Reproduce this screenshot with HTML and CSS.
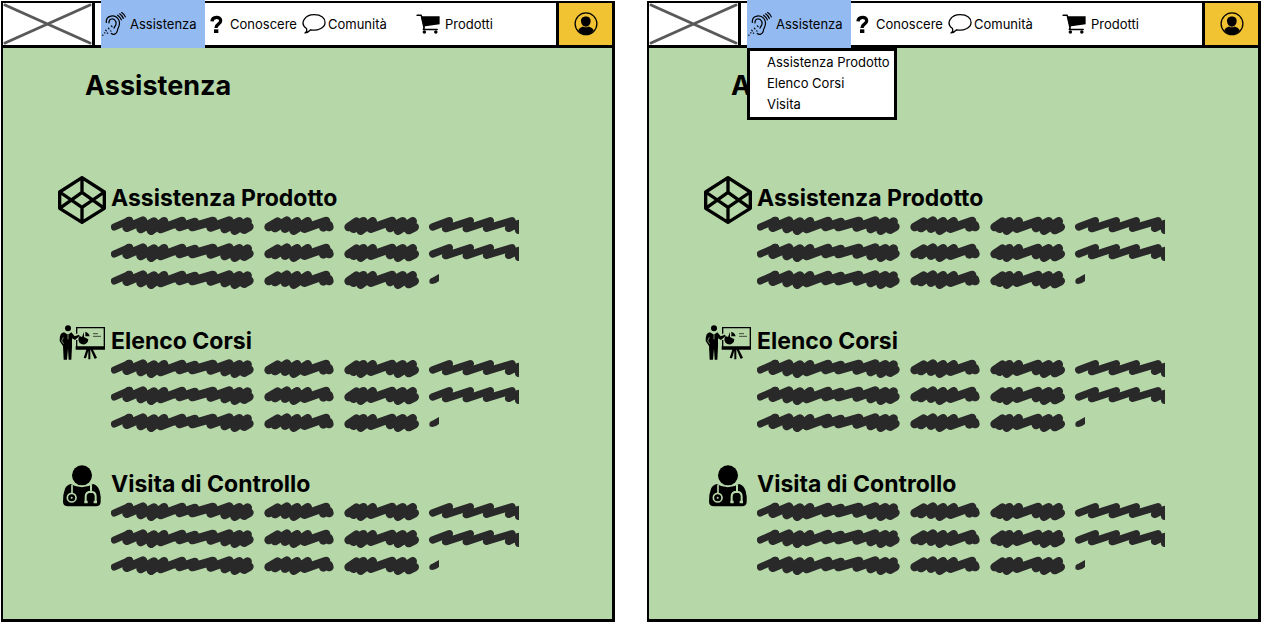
FILE: index.html
```html
<!DOCTYPE html>
<html lang="it">
<head>
<meta charset="utf-8">
<meta name="viewport" content="width=device-width, initial-scale=1">
<title>Assistenza</title>
<link rel="stylesheet" href="styles.css">
</head>
<body>
<svg class="sprite" aria-hidden="true">
  <symbol id="ear" viewBox="303 36 72 75">
    <g fill="none" stroke="#000" stroke-width="3.6" stroke-linecap="round">
      <path d="M316 69C314 46 343 43 353 61C361 77 350 83 349 94C347 104 337 108 331 102"/>
      <path d="M324 70C323 57 338 54 344 65C349 74 341 80 339 86"/>
      <path d="M350 47Q358 53 361 61M356 43Q364 49 367 57M362 39Q371 45 373 52"/>
      <path d="M305 107h1M311 100h1M319 101h1M314 92l2 2M322 86l2 2M329 94l1 1M331 79l2 2"/>
    </g>
  </symbol>
  <symbol id="question" viewBox="630 45 39 54">
    <path fill="none" stroke="#000" stroke-width="10" d="M636 64C637 49 662 48 662 62C662 74 648 71 648 84"/>
    <path fill="#000" d="M642 88h13v11h-13z"/>
  </symbol>
  <symbol id="bubble" viewBox="34 42 75 66">
    <path fill="#fff" stroke="#000" stroke-width="4" stroke-linejoin="round" d="M48 89C25 73 43 46 72 46C95 46 106 57 106 70C106 87 82 98 61 93Q53 102 43 103Q51 99 48 89Z"/>
  </symbol>
  <symbol id="cart" viewBox="377 45 69 60">
    <path fill="none" stroke="#000" stroke-width="4" stroke-linejoin="round" stroke-linecap="round" d="M380 50h12l9 41h37M401 83l-3 8"/>
    <path fill="#000" d="M391 53h54v23l-46 6z"/>
    <circle cx="401" cy="98" r="5"/><circle cx="434" cy="98" r="5"/>
  </symbol>
  <symbol id="user" viewBox="92 36 75 75">
    <circle cx="129.500" cy="73" r="34" fill="none" stroke="#000" stroke-width="4"/>
    <path fill="#000" d="M129 50C140 50 145 57 144 66C143 76 137 82 129 82C121 82 115 76 114 66C113 57 118 50 129 50ZM105 93Q109 84 120 81Q129 87 138 81Q150 84 154 93Q145 106 129 106Q114 106 105 93Z"/>
  </symbol>
  <symbol id="box" viewBox="24 33 144 144">
    <path fill="none" stroke="#000" stroke-width="10" stroke-linejoin="round" d="M96 38L163 81V130L96 172L29 130V81ZM96 38V82M96 127V172M29 81L96 127L163 81M29 130L96 82L163 130"/>
  </symbol>
  <symbol id="trainer" viewBox="24 15 144 144">
    <circle cx="54" cy="43" r="9"/>
    <path d="M42 55L54 62L64 55L74 67L87 62L89 66L75 78L66 73V98L64 137H56L54 104L51 137H41L39 96L29 81Q28 56 42 55Z"/>
    <path fill="none" stroke="#b6d7a8" stroke-width="2" d="M40 70L35 81L41 89M54 63V76"/>
    <path fill="none" stroke="#000" stroke-width="4" d="M80 59V41H163V104M80 78V104"/>
    <path d="M77 97h88v10H77zM115 106h6v30h-6zM109 107h7l-8 26-7-1zM122 107h7l12 24-7 4z"/>
    <path d="M102 54V69L115 76A15 15 0 1 1 89 66L96 69ZM106 53Q117 56 119 67H106Z"/>
    <path fill="none" stroke="#000" stroke-width="2" d="M129 59h15M129 67h24"/>
  </symbol>
  <symbol id="doctor" viewBox="24 18 144 144">
    <circle cx="96" cy="58" r="30"/>
    <path d="M62 84Q95 104 130 84Q144 88 149 105Q154 125 152 138Q151 151 138 151H54Q40 151 39 138Q38 116 45 98Q50 87 62 84Z"/>
    <g fill="none" stroke="#b6d7a8" stroke-width="5">
      <path d="M66 86V111"/><circle cx="65" cy="125" r="13"/>
      <path stroke-width="6" d="M123 87V105M107 138V121Q107 107 123 107Q137 108 137 121V138"/>
    </g>
    <circle cx="65" cy="125" r="3" fill="#b6d7a8"/>
    <path fill="#b6d7a8" d="M103 134h10v8h-10zM131 134h10v8h-10z"/>
  </symbol>
  <symbol id="words" viewBox="183 147 957 70">
    <g fill="none" stroke="#292929" stroke-width="26" stroke-linecap="round" stroke-linejoin="round">
      <path stroke-width="21" d="M193 186L239 166"/>
      <path d="M237 168L230 188L279 167L272 192L312 170L303 197L342 169L332 192L396 168L389 186L434 171L427 186L489 168L482 187L538 167L524 192L568 169L554 197L593 170L582 194L598 185"/>
      <path d="M656 186L683 170L675 189L711 167L705 191L741 169L731 197L773 169L763 191L828 168L820 187L836 180L838 186"/>
      <path d="M896 186L920 170L910 191L940 169L932 197L968 169L962 191L1026 168L1020 189L1058 169L1044 197L1088 169L1076 195L1094 186"/>
    </g>
  </symbol>
  <symbol id="scribble" viewBox="183 147 1224 231">
    <use href="#words" x="183" y="147" width="957" height="70"/>
    <use href="#words" x="183" y="228" width="957" height="70"/>
    <use href="#words" x="183" y="309" width="957" height="70"/>
    <g fill="none" stroke="#292929" stroke-width="22" stroke-linecap="round" stroke-linejoin="round">
      <path id="tail" d="M1148 186L1198 167L1187 191L1261 167L1249 191L1321 167L1310 190L1386 167L1376 190L1405 176L1406 196"/>
      <use href="#tail" y="81"/>
    </g>
    <path fill="#292929" d="M1138 349Q1138 340 1147 338L1167 327V348Q1150 362 1139 355Z"/>
  </symbol>
</svg>

<main class="board">
  <article class="screen">
    <header class="topbar">
      <svg class="logo" viewBox="0 0 89 42" preserveAspectRatio="none" role="img" aria-label="Logo"><path d="M2 2L87 40M2 40L87 2"/></svg>
      <nav class="nav">
        <div class="nav-item nav-item--active">
          <a class="nav-link" href="#"><svg class="icon"><use href="#ear"/></svg>Assistenza</a>
        </div>
        <a class="nav-link nav-link--help" href="#"><svg class="icon icon--small"><use href="#question"/></svg>Conoscere</a>
        <a class="nav-link nav-link--community" href="#"><svg class="icon"><use href="#bubble"/></svg>Comunità</a>
        <a class="nav-link nav-link--shop" href="#"><svg class="icon"><use href="#cart"/></svg>Prodotti</a>
      </nav>
      <button class="account" type="button" aria-label="Account"><svg class="icon"><use href="#user"/></svg></button>
    </header>
    <div class="content">
      <h1 class="title">Assistenza</h1>
      <section class="topic">
        <svg class="topic-icon" aria-hidden="true"><use href="#box"/></svg>
        <div class="topic-body"><h2 class="topic-title">Assistenza Prodotto</h2><svg class="scribble" aria-hidden="true"><use href="#scribble"/></svg></div>
      </section>
      <section class="topic">
        <svg class="topic-icon" aria-hidden="true"><use href="#trainer"/></svg>
        <div class="topic-body"><h2 class="topic-title">Elenco Corsi</h2><svg class="scribble" aria-hidden="true"><use href="#scribble"/></svg></div>
      </section>
      <section class="topic">
        <svg class="topic-icon" aria-hidden="true"><use href="#doctor"/></svg>
        <div class="topic-body"><h2 class="topic-title">Visita di Controllo</h2><svg class="scribble" aria-hidden="true"><use href="#scribble"/></svg></div>
      </section>
    </div>
  </article>

  <article class="screen">
    <header class="topbar">
      <svg class="logo" viewBox="0 0 89 42" preserveAspectRatio="none" role="img" aria-label="Logo"><path d="M2 2L87 40M2 40L87 2"/></svg>
      <nav class="nav">
        <div class="nav-item nav-item--active">
          <a class="nav-link" href="#"><svg class="icon"><use href="#ear"/></svg>Assistenza</a>
          <ul class="menu">
            <li><a class="menu-link" href="#">Assistenza Prodotto</a></li>
            <li><a class="menu-link" href="#">Elenco Corsi</a></li>
            <li><a class="menu-link" href="#">Visita</a></li>
          </ul>
        </div>
        <a class="nav-link nav-link--help" href="#"><svg class="icon icon--small"><use href="#question"/></svg>Conoscere</a>
        <a class="nav-link nav-link--community" href="#"><svg class="icon"><use href="#bubble"/></svg>Comunità</a>
        <a class="nav-link nav-link--shop" href="#"><svg class="icon"><use href="#cart"/></svg>Prodotti</a>
      </nav>
      <button class="account" type="button" aria-label="Account"><svg class="icon"><use href="#user"/></svg></button>
    </header>
    <div class="content">
      <h1 class="title">Assistenza</h1>
      <section class="topic">
        <svg class="topic-icon" aria-hidden="true"><use href="#box"/></svg>
        <div class="topic-body"><h2 class="topic-title">Assistenza Prodotto</h2><svg class="scribble" aria-hidden="true"><use href="#scribble"/></svg></div>
      </section>
      <section class="topic">
        <svg class="topic-icon" aria-hidden="true"><use href="#trainer"/></svg>
        <div class="topic-body"><h2 class="topic-title">Elenco Corsi</h2><svg class="scribble" aria-hidden="true"><use href="#scribble"/></svg></div>
      </section>
      <section class="topic">
        <svg class="topic-icon" aria-hidden="true"><use href="#doctor"/></svg>
        <div class="topic-body"><h2 class="topic-title">Visita di Controllo</h2><svg class="scribble" aria-hidden="true"><use href="#scribble"/></svg></div>
      </section>
    </div>
  </article>
</main>
</body>
</html>
```

FILE: styles.css
```css
* {
  box-sizing: border-box;
}

body {
  margin: 0;
  background: #fff;
  color: #000;
  font-family: Inter, "Open Sans", sans-serif;
  font-size: 13px;
}

.sprite {
  position: absolute;
  width: 0;
  height: 0;
}

.board {
  display: grid;
  grid-template-columns: 1fr 1fr;
  gap: 32px;
  min-height: 100vh;
  padding: 1px 0 1px 1px;
}

.screen {
  display: flex;
  flex-direction: column;
  border: solid #000;
  border-width: 2px 3px 3px 2px;
  background: #b6d7a8;
}

.topbar {
  display: flex;
  height: 45px;
  border-bottom: 3px solid #000;
  background: #fff;
}

.logo {
  flex: none;
  width: 92px;
  height: 42px;
  border-right: 3px solid #000;
  fill: none;
  stroke: #595959;
  stroke-width: 3px;
  stroke-linecap: round;
}

.nav {
  display: flex;
  flex: 1;
  padding-left: 6px;
}

.nav-item {
  position: relative;
}

.nav-item--active {
  width: 104px;
  margin: -3px 0;
  padding: 2px 0 3px 1px;
  background: #94baf2;
}

.nav-link {
  display: flex;
  align-items: center;
  gap: 4px;
  height: 100%;
  color: inherit;
  text-decoration: none;
  white-space: nowrap;
}

.nav-link--help {
  gap: 7px;
  width: 97px;
  padding-left: 5px;
}

.nav-link--community {
  gap: 2px;
  width: 114px;
}

.nav-link--shop {
  gap: 5px;
}

.icon {
  flex: none;
  width: 24px;
  height: 26px;
}

.icon--small {
  width: 13px;
  height: 18px;
}

.account {
  display: flex;
  align-items: center;
  justify-content: center;
  width: 56px;
  padding: 0;
  border: 0;
  border-left: 3px solid #000;
  background: #f1c232;
}

.menu {
  position: absolute;
  top: 100%;
  left: 0;
  width: 150px;
  margin: 0;
  padding: 1px 0 2px 17px;
  border: 3px solid #000;
  background: #fff;
  list-style: none;
  line-height: 21px;
}

.menu-link {
  color: inherit;
  text-decoration: none;
  white-space: nowrap;
}

.content {
  display: flex;
  flex-direction: column;
  gap: 28px;
  padding: 20px 24px 24px 55px;
}

.title {
  margin: 0 0 44px 27px;
  font-size: 27px;
  line-height: 36px;
}

.topic {
  display: flex;
  gap: 5px;
}

.topic-icon {
  flex: none;
  width: 48px;
  height: 48px;
}

.topic-body {
  padding-top: 6px;
}

.topic-title {
  margin: 0;
  font-size: 23px;
  line-height: 32px;
}

.scribble {
  display: block;
  width: 408px;
  height: 77px;
}
```
